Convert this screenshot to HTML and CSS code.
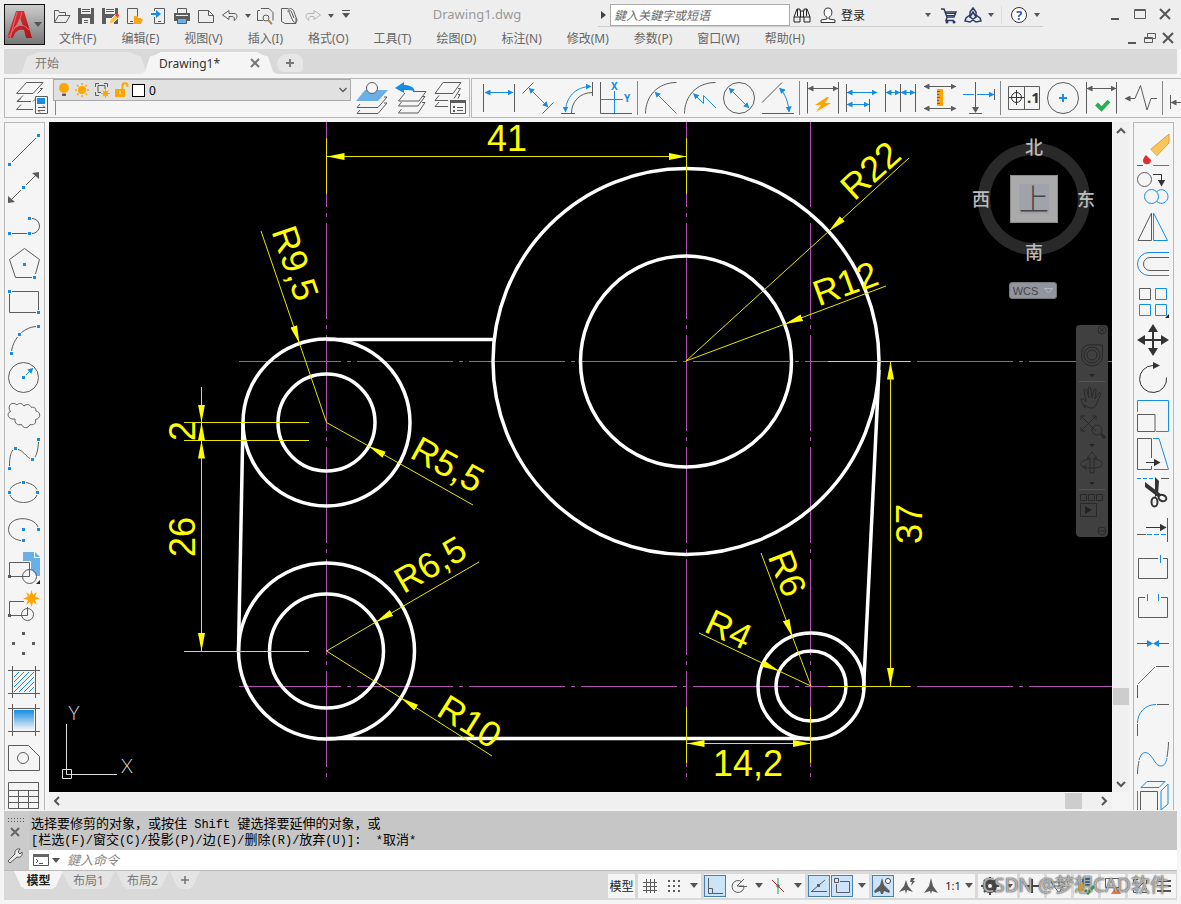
FILE: index.html
```html
<!DOCTYPE html>
<html lang="zh-CN">
<head>
    <meta charset="UTF-8">
    <meta name="viewport" content="width=device-width, initial-scale=1.0">
    <title>Drawing1.dwg</title>
    <link rel="stylesheet" href="styles.css">
</head>
<body>

<!-- Shared arrow heads and gradients -->
<svg class="defs" width="0" height="0" aria-hidden="true">
    <defs>
        <marker id="arrow-blue" viewBox="0 0 6 6" refX="5.5" refY="3" markerWidth="6" markerHeight="6" markerUnits="userSpaceOnUse" orient="auto-start-reverse"><path d="M0 0L6 3L0 6z" fill="#168ce6"/></marker>
        <marker id="arrow-gray" viewBox="0 0 6 6" refX="5.5" refY="3" markerWidth="6" markerHeight="6" markerUnits="userSpaceOnUse" orient="auto-start-reverse"><path d="M0 0L6 3L0 6z" fill="#5c5c5c"/></marker>
        <marker id="arrow-dark" viewBox="0 0 7 8" refX="6.5" refY="4" markerWidth="7" markerHeight="8" markerUnits="userSpaceOnUse" orient="auto-start-reverse"><path d="M0 0L7 4L0 8z" fill="#333"/></marker>
        <marker id="arrow-dim" viewBox="0 0 18 8" refX="18" refY="4" markerWidth="18" markerHeight="8" markerUnits="userSpaceOnUse" orient="auto-start-reverse"><path d="M0 .5L18 4L0 7.5z" fill="#ff0"/></marker>
        <linearGradient id="fill-fade" x1="0" y1="0" x2="0" y2="1"><stop offset="0" stop-color="#168ce6"/><stop offset="1" stop-color="#f5f5f5"/></linearGradient>
        <linearGradient id="logo-red" x1="0" y1="0" x2="1" y2="1"><stop offset="0" stop-color="#e0393c"/><stop offset="1" stop-color="#a81419"/></linearGradient>
    </defs>
</svg>

<!-- Title bar and menu -->
<header class="header">
    <button class="app-button" aria-label="应用程序菜单">
        <svg width="26" height="28" viewBox="0 0 26 28"><path d="M0 27L9 0h8l8 27h-6l-2-8c-5-1-9 1-11 8z" fill="url(#logo-red)"/><path d="M13 7l3 8c-3-1-5 0-7 2z" fill="#999"/><path d="M10 1l-7 26M15 1c-2 9-7 17-15 26M7 17c5-4 10-4 15 2" stroke="#f0696b" fill="none"/></svg>
        <span class="caret caret-big"></span>
    </button>
    <div class="header-main">
        <div class="title-row">
            <div class="quick-access">
                <button aria-label="打开"><svg viewBox="0 0 18 18" width="18" height="18"><path class="g" d="M1.500 15.500V3.500h4l1 2h6v3M1.500 15.500l4-7h11.500l-4 7z"/></svg></button>
                <button aria-label="保存"><svg viewBox="0 0 18 18" width="18" height="18"><path class="fg" d="M1 1h16v16H1z"/><path d="M4 1h10v6H4zM5 11h8v6H5z" fill="#eee"/><path class="fg" d="M5 2h8v1H5zM5 4h8v1H5zM7 13h4v1H7zM7 15h4v1H7z"/></svg></button>
                <button aria-label="另存为"><svg viewBox="0 0 18 18" width="18" height="18"><path class="fg" d="M1 1h16v16H1z"/><path d="M4 1h10v6H4zM5 11h8v6H5z" fill="#eee"/><path class="fg" d="M5 2h8v1H5zM5 4h8v1H5z"/><path d="M8 17l1-4 6-6 3 3-6 6z" fill="#fbc04d" stroke="#eee"/><path d="M14 8l3 3 1-3-2-2z" fill="#e33"/></svg></button>
                <button aria-label="从移动设备打开"><svg viewBox="0 0 18 18" width="18" height="18"><path class="g" d="M2.500 1.500h10v8M2.500 1.500v15h6M5 14.500h3"/><path d="M9 16V9h3l1 2h3v1h2l-2 5H9z" fill="#f7a41d"/></svg></button>
                <button aria-label="保存到移动设备"><svg viewBox="0 0 18 18" width="18" height="18"><path class="g" d="M5.500 4V1.500h10v15h-10V10M9 14.500h3"/><path d="M2 6h5V3l5 4-5 4V8H2z" fill="#168ce6"/></svg></button>
                <button aria-label="打印"><svg viewBox="0 0 18 18" width="18" height="18"><path class="g" d="M4.500 6V1.500h9V6"/><path class="fg" d="M1 6h16v8H1z"/><path d="M3 8h12v1H3z" fill="#eee"/><path d="M4.500 11.500h9v5h-9z" fill="#69b0e6" stroke="#5c5c5c"/></svg></button>
                <button aria-label="新建"><svg viewBox="0 0 18 18" width="18" height="18"><path class="g" d="M1.500 3.500h10l5 5v7h-15zM11.500 3.500v5h5"/></svg></button>
                <button aria-label="放弃"><svg viewBox="0 0 18 18" width="18" height="18"><path class="g" d="M1.500 8L8 3.500v3h5c4 0 4 5 0 7 1-2 0-4-2-4H8v3z"/></svg></button>
                <button class="narrow" aria-label="放弃列表"><span class="caret"></span></button>
                <button aria-label="打印预览"><svg viewBox="0 0 18 18" width="18" height="18"><path class="g" d="M5 1.500h8l4 4v8M1.500 4v9.500H7M1.500 3.500H4"/><circle class="g" cx="10" cy="11" r="3"/><path d="M12 13l4 4" stroke="#b08a4a" stroke-width="2"/></svg></button>
                <button aria-label="发布"><svg viewBox="0 0 18 18" width="18" height="18"><path class="g" d="M1.500 1.500h7M1.500 1.500v13L5 16.500h11V11M8 5c0-5 5-4 6 0l3 8c0 3-3 3-4 1L9 5c0-2 2-2 2.500 0L14 11"/></svg></button>
                <button class="faded" aria-label="重做"><svg viewBox="0 0 18 18" width="18" height="18"><path class="g" d="M16.500 8L10 3.500v3H5c-4 0-4 5 0 7-1-2 0-4 2-4h3v3z"/></svg></button>
                <button class="narrow" aria-label="重做列表"><span class="caret"></span></button>
                <button class="narrow wide-caret" aria-label="自定义快速访问工具栏"><span class="caret caret-bar"></span></button>
            </div>
            <h1 class="doc-title">Drawing1.dwg</h1>
            <div class="info-center">
                <span class="caret-right"></span>
                <input class="search" type="text" placeholder="鍵入关鍵字或短语" aria-label="搜索">
                <button aria-label="查找"><svg viewBox="0 0 18 18" width="18" height="18"><path d="M4 3h3v2h4V3h3l3 8v5h-6v-5H7v5H1v-5z" fill="#eee" stroke="#222"/><path d="M7.500 5v6M10.500 5v6M4.500 3v7M13.500 3v7M1 11h6M11 11h6" stroke="#222"/></svg></button>
                <button class="login" aria-label="登录"><svg viewBox="0 0 18 18" width="18" height="18"><path d="M9 2c-6 0-4 9-1 9v2l-6 1v2.500h14V14l-6-1v-2c3 0 5-9-1-9z" fill="#fff" stroke="#333"/></svg>登录</button>
                <button class="narrow login-drop" aria-label="登录选项"><span class="caret"></span></button>
                <button aria-label="购物车"><svg viewBox="0 0 18 18" width="18" height="18"><path d="M1 3h3l3 8h7l2-5H5.500M7 11.500l-1 3h8" fill="none" stroke="#2b3a67" stroke-width="1.500"/><path d="M6 7.500h10M7 9.500h8" stroke="#2b3a67"/><circle cx="7" cy="16" r="1.500" fill="#2b3a67"/><circle cx="14" cy="16" r="1.500" fill="#2b3a67"/></svg></button>
                <button aria-label="应用商店"><svg viewBox="0 0 18 18" width="18" height="18"><path d="M9 2l-3 4v3l-4 3-1 3 5 1 3-2 3 2 5-1-1-3-4-3V6zM9 6l-3 5 3 2 3-2z" fill="none" stroke="#2b3a67" stroke-width="1.500"/></svg></button>
                <button class="narrow" aria-label="应用选项"><span class="caret"></span></button>
                <span class="info-sep"></span>
                <button class="help" aria-label="帮助"><svg viewBox="0 0 18 18" width="18" height="18"><circle cx="9" cy="9" r="7.500" fill="#fff" stroke="#333"/><text x="9" y="14" text-anchor="middle" font-size="13" font-weight="bold" fill="#1f5fc4">?</text></svg></button>
                <button class="narrow" aria-label="帮助选项"><span class="caret"></span></button>
            </div>
            <div class="window-buttons">
                <button aria-label="最小化"><svg viewBox="0 0 14 14" width="14" height="14"><path class="w2" d="M3 12h8"/></svg></button>
                <button aria-label="最大化"><svg viewBox="0 0 14 14" width="14" height="14"><path class="g" d="M1.500 2.500h11v9h-11z"/><path class="g" d="M1 3.500h12"/></svg></button>
                <button aria-label="关闭"><svg viewBox="0 0 14 14" width="14" height="14"><path class="w2" d="M2 2l10 10M12 2L2 12"/></svg></button>
            </div>
        </div>
        <div class="menu-row">
            <nav class="menu">
                <a href="#">文件(F)</a>
                <a href="#">编辑(E)</a>
                <a href="#">视图(V)</a>
                <a href="#">插入(I)</a>
                <a href="#">格式(O)</a>
                <a href="#">工具(T)</a>
                <a href="#">绘图(D)</a>
                <a href="#">标注(N)</a>
                <a href="#">修改(M)</a>
                <a href="#">参数(P)</a>
                <a href="#">窗口(W)</a>
                <a href="#">帮助(H)</a>
            </nav>
            <div class="window-buttons small">
                <button aria-label="最小化图形"><svg viewBox="0 0 14 14" width="14" height="14"><path class="w2" d="M3 12h8"/></svg></button>
                <button aria-label="还原图形"><svg viewBox="0 0 14 14" width="14" height="14"><path class="g" d="M1.500 6.500h8v5h-8zM4.500 6V2.500h8v5H10M1 7.500h8"/></svg></button>
                <button aria-label="关闭图形"><svg viewBox="0 0 14 14" width="14" height="14"><path class="w2" d="M2 2l10 10M12 2L2 12"/></svg></button>
            </div>
        </div>
    </div>
</header>

<!-- Document tabs -->
<div class="doc-tabs">
    <button class="doc-tab">开始</button>
    <button class="doc-tab active">Drawing1*<svg viewBox="0 0 10 10" width="10" height="10"><path d="M1 1l8 8M9 1L1 9" stroke="#777" stroke-width="2"/></svg></button>
    <button class="doc-tab add" aria-label="新图形"><svg viewBox="0 0 10 10" width="10" height="10"><path d="M5 1v8M1 5h8" stroke="#777" stroke-width="2"/></svg></button>
</div>

<!-- Layer and dimension toolbars -->
<div class="toolbars">
    <div class="toolbar layers">
        <span class="grip"></span>
        <button aria-label="图层特性"><svg class="icon" viewBox="0 0 32 32"><path class="g" d="M10.500.5H27L17 11.500H.5zM24 6.500h2.500l-5 5M5 16.500l-4 3h14M7 13.500l-6 6M17 19.500l3-3M5 22.500l-4.500 5H17"/><path d="M19.500 14.500h12v17h-12z" fill="#f5f5f5" stroke="#5c5c5c"/><path class="fb" d="M21 16h8v6h-8z"/><path class="g" d="M22 25.500h7l-2-2M29 28.500h-7l2 2"/></svg></button>
        <div class="layer-cell">
            <div class="layer-box">
                <svg viewBox="0 0 12 16" width="12" height="16"><circle cx="6" cy="6" r="5" fill="#ffa500"/><path d="M4 11h4v1H4z" fill="#ffa500"/><path class="fg" d="M4 12h4v2H4z"/></svg>
                <svg viewBox="0 0 16 16" width="16" height="16"><circle cx="8" cy="8" r="4" fill="#ffa500"/><path d="M8 1v2M8 13v2M1 8h2M13 8h2M3 3l1.500 1.500M11.500 11.500L13 13M13 3l-1.500 1.500M3 13l1.500-1.500" stroke="#ffa500" stroke-width="1.500"/></svg>
                <svg viewBox="0 0 18 16" width="18" height="16"><path class="g" d="M2.500 5V1.500H6M11 1.500h3.500V5M2.500 10v3.500H6M5 3.500h7V7M5 3.500v7h3"/><circle cx="12.500" cy="11.500" r="2.500" fill="#ffa500"/><path d="M12.500 7v9M8 11.500h9M9.500 8.500l6 6M15.500 8.500l-6 6" stroke="#ffa500"/></svg>
                <svg viewBox="0 0 16 16" width="16" height="16"><path d="M1 7h10v8H1z" fill="#ffa500"/><path d="M8.500 7V3.500c0-3 5-3 5 0V5" stroke="#ffa500" stroke-width="2" fill="none"/><path d="M6 9v3" stroke="#fff"/></svg>
                <span class="swatch"></span>
                <select aria-label="图层"><option>0</option></select>
                <svg class="chevron" viewBox="0 0 8 6" width="8" height="6"><path class="g" d="M.5 1L4 4.500 7.500 1"/></svg>
            </div>
        </div>
        <button aria-label="将对象的图层置为当前"><svg class="icon" viewBox="0 0 32 32"><path d="M9 8h23L22 19H0z" fill="#69b0e6"/><circle cx="16" cy="6" r="5.500" fill="#f5f5f5" stroke="#5c5c5c"/><path class="g" d="M28 15h3L22 25.500H1l3-3.500M28 21h3l-9 10.500H1l3-3.500"/></svg></button>
        <button aria-label="上一个图层"><svg class="icon" viewBox="0 0 32 32"><path class="g" d="M18 9.500h13L24 19H3.500L10 11M27 14.500h3l-7 9.500H3.500l3-4M27 20.500h3L23 31H3.500l3-4"/><path class="fb" d="M0 6l9-6v3c6 0 10 2 11 7-3-2-6-2-11-2v3z"/></svg></button>
        <button aria-label="图层状态管理器"><svg class="icon" viewBox="0 0 32 32"><path class="g" d="M9 .5h18L19 11.500H1zM24 6.500h2.500L20 16.500M5 13.500l-4 5h13M5 20l-4 4.500h13M24 12.500h2l-2 4"/><path d="M16.500 18.500h15v13h-15z" fill="#f5f5f5" stroke="#5c5c5c"/><path class="fg" d="M16 18h16v3H16zM19 24h2v2h-2zM19 28h2v2h-2z"/><path class="g" d="M23 25.500h6M23 28.500h6"/></svg></button>
    </div>
    <div class="toolbar dims">
        <span class="grip"></span>
        <button aria-label="线性"><svg class="icon" viewBox="0 0 32 32"><path class="g" d="M.5 2v28M31.500 2v28"/><path class="b two" d="M2 10.500h28"/></svg></button>
        <button aria-label="对齐"><svg class="icon" viewBox="0 0 32 32"><path class="g" d="M.5 11.500l11-11M20.500 31.500l11-11"/><path class="b two" d="M7 6l19 19"/></svg></button>
        <button aria-label="弧长"><svg class="icon" viewBox="0 0 32 32"><path class="g" d="M0 31.500h14M31.500 0v14M10.500 31c0-11 8-20.500 21-20.500"/><path class="b two" d="M4.500 30C4.500 16 14 4.500 30 4.500"/></svg></button>
        <button aria-label="坐标"><svg class="icon" viewBox="0 0 32 32"><path class="g" d="M.5 0v31.500H32"/><path class="b" d="M14.500 9v22M1 17.500h22"/><text class="tb" x="11" y="8">X</text><text class="tb" x="24" y="20">Y</text></svg></button>
        <span class="sep"></span>
        <button aria-label="半径"><svg class="icon" viewBox="0 0 32 32"><path class="g" d="M.5 31.500C.5 15 12 .5 31.500.5"/><path class="b one" d="M31.500 31.500L10 10"/></svg></button>
        <button aria-label="折弯"><svg class="icon" viewBox="0 0 32 32"><path class="g" d="M.5 31.500C.5 15 12 .5 31.500.5"/><path class="b one" d="M32 26L19.500 13.500v8L9.500 11.500"/></svg></button>
        <button aria-label="直径"><svg class="icon" viewBox="0 0 32 32"><circle class="g" cx="16" cy="16" r="15.500"/><path class="b two" d="M6 6l20 20"/></svg></button>
        <button aria-label="角度"><svg class="icon" viewBox="0 0 32 32"><path class="g" d="M0 20.500l20-20M0 31.500h32"/><path class="b two" d="M17.500 6c6 6 9 15 9.500 24"/></svg></button>
        <span class="sep"></span>
        <button aria-label="快速标注"><svg class="icon" viewBox="0 0 32 32"><path class="g" d="M.5 0v31.500M31.500 0v31.500"/><path class="g two" d="M1 6.500h30"/><path d="M20 15l-12 8h6l-5 7 15-9h-6l4-6z" fill="#ffa500"/></svg></button>
        <button aria-label="基线"><svg class="icon" viewBox="0 0 32 32"><path class="g" d="M.5 2v28M23.500 17v13"/><path class="b two" d="M1 10.500h30"/><path class="b two" d="M1 22.500h22"/></svg></button>
        <button aria-label="连续"><svg class="icon" viewBox="0 0 32 32"><path class="g" d="M.5 2v28M15.500 2v28M30.500 2v28"/><path class="b two" d="M1 10.500h14"/><path class="b two" d="M16 10.500h14"/></svg></button>
        <button aria-label="等距标注"><svg class="icon" viewBox="0 0 32 32"><path class="g two" d="M0 4.500h32"/><path class="g two" d="M0 26.500h32"/><path d="M13 7h6v17h-6z" fill="#ffa500"/><path d="M13 9.500h3M13 12.500h2M13 15.500h3M13 18.500h2M13 21.500h3" stroke="#5c5c5c"/></svg></button>
        <button aria-label="折断标注"><svg class="icon" viewBox="0 0 32 32"><path class="g" d="M12.500 0v28M6 31.500h13M31.500 7v11"/><path class="fg" d="M9 25h7l-3.500 6z"/><path class="b" d="M0 12.500h11"/><path class="b one" d="M14 12.500h17"/></svg></button>
        <span class="sep"></span>
        <button aria-label="公差"><svg class="icon" viewBox="0 0 32 32"><path class="g" d="M.5 4.500h31v23H.5zM16.500 4v23"/><circle cx="8.500" cy="15.500" r="5" stroke="#333" fill="none"/><path d="M1 15.500h15M8.500 8v15" stroke="#333"/><text class="td" x="19" y="21">.1</text></svg></button>
        <button aria-label="圆心标记"><svg class="icon" viewBox="0 0 32 32"><circle class="g" cx="16" cy="16" r="15.500"/><path d="M16 12v8M12 16h8" stroke="#168ce6" stroke-width="2"/></svg></button>
        <button aria-label="检验"><svg class="icon" viewBox="0 0 32 32"><path class="g" d="M.5 0v31.500M30.500 0v31.500"/><path class="g two" d="M1 6.500h29"/><path d="M10.500 22l5 5 7.500-8" stroke="#27ae55" stroke-width="4" fill="none"/></svg></button>
        <button aria-label="折弯线性"><svg class="icon" viewBox="0 0 32 32"><path class="g one" d="M32 16.500h-6L22 28 15.500 3.500 10 16.500H0"/></svg></button>
        <span class="sep"></span>
        <button aria-label="编辑标注"><svg class="icon" viewBox="0 0 32 32"><path class="g" d="M.5 13v14"/><path class="g one" d="M12 20.500H1"/></svg></button>
    </div>
</div>

<!-- Drawing area with tool palettes -->
<main class="workspace">
    <div class="palette">
        <span class="grip"></span>
        <button aria-label="直线"><svg class="icon" viewBox="0 0 32 32"><path class="g" d="M4 28L28 4"/><path class="dot" d="M1.500 30.500h0M30.500 1.500h0"/></svg></button>
        <button aria-label="构造线"><svg class="icon" viewBox="0 0 32 32"><path class="g" d="M3 28l10-10M18 13L28 3"/><path class="fg" d="M0 31v-7l7 6zM31 0v7l-7-6z"/><path class="dot" d="M15.500 15.500h0"/></svg></button>
        <button aria-label="多段线"><svg class="icon" viewBox="0 0 32 32"><path class="g" d="M4 23.500h15M24 8.500a7.500 7.500 0 0 1 0 15"/><path class="dot" d="M1.500 23.500h0M21.500 23.500h0M21.500 8.500h0"/></svg></button>
        <button aria-label="多边形"><svg class="icon" viewBox="0 0 32 32"><path class="g" d="M27.500 26l4-14.500-15-11-15 11 6 18H24"/><path class="dot" d="M16.500 16.500h0M26.500 29.500h0"/></svg></button>
        <button aria-label="矩形"><svg class="icon" viewBox="0 0 32 32"><path class="g" d="M4 5.500h26.500V24M1.500 8v18.500H28"/><path class="dot" d="M1.500 5.500h0M30.500 26.500h0"/></svg></button>
        <button aria-label="圆弧"><svg class="icon" viewBox="0 0 32 32"><path class="g" d="M3.500 27c1-6 3-10 6-14M13.500 8.500C18 5 22 3 28 2.500"/><path class="dot" d="M3.500 29.500h0M11.500 10.500h0M30.500 2.500h0"/></svg></button>
        <button aria-label="圆"><svg class="icon" viewBox="0 0 32 32"><circle class="g" cx="15.500" cy="15.500" r="15"/><path class="b one" d="M18 13l7-7"/><path class="dot" d="M15.500 15.500h0"/></svg></button>
        <button aria-label="修订云线"><svg class="icon" viewBox="0 0 32 32"><path class="g" d="M2.500 11.500C-1.500 6 4 .5 9 5c2-2.500 5-2 7 1 3-2.500 6-1.500 7.500 1.500 3-1 4.500 1 4.500 3.500 5 1 5 7.500-.5 8.500 1 4-2 6-5.500 5-2 4.500-7 4-8.500 0-4 1-7-1-6.500-5.500-7 1-9-6-4.500-7.500z"/></svg></button>
        <button aria-label="样条曲线"><svg class="icon" viewBox="0 0 32 32"><path class="g" d="M1.500 28c0-8 1-13 3.500-16M10 11.500c5 1 8 7 12 9M27 19c2-3 3-8 3.500-15"/><path class="dot" d="M1.500 30.500h0M7.500 10.500h0M24.500 21.500h0M30.500 1.500h0"/></svg></button>
        <button aria-label="椭圆"><svg class="icon" viewBox="0 0 32 32"><path class="g" d="M2 13.500c1-3 6-6 11-7M18 6.500c5 1 9 3 11 7M29 19c-4 10-23 10-27 0"/><path class="dot" d="M1.500 16.500h0M29.500 16.500h0M15.500 6.500h0"/></svg></button>
        <button aria-label="椭圆弧"><svg class="icon" viewBox="0 0 32 32"><path class="g" d="M30 13C26 2 1 1 .5 15.500.5 22 7 26 13 26.500"/><path class="dot" d="M15.500 15.500h0M30.500 15.500h0M15.500 26.500h0"/></svg></button>
        <button aria-label="插入块"><svg class="icon" viewBox="0 0 32 32"><path d="M15 0h11v6h6v18h-3l-6-7V9h-8z" fill="#69b0e6"/><path d="M27 0l5 5h-5z" fill="#69b0e6"/><path class="g" d="M1.500 10.500h20v14h-20z"/><circle class="g" cx="21.500" cy="24.500" r="7"/><path class="dot dark" d="M1.500 24.500h0"/><path d="M32 28v4h-4z" fill="#222"/></svg></button>
        <button aria-label="创建块"><svg class="icon" viewBox="0 0 32 32"><path class="g" d="M16 11.500H1.500v14h18V17"/><circle class="g" cx="19.500" cy="24.500" r="6"/><path class="dot dark" d="M1.500 25.500h0"/><path d="M23.500 0l1.500 5 4-3-2 4.500 5 2-5 1.500 2 5-4-3-1.500 5-1.500-5-4 3 2-5-5-1.500 5-2-2-4.500 4 3z" fill="#ffa500"/></svg></button>
        <button aria-label="点"><svg class="icon" viewBox="0 0 32 32"><path class="dot dark" d="M15.500 5.500h0M5.500 15.500h0M25.500 15.500h0M15.500 25.500h0"/></svg></button>
        <button aria-label="图案填充"><svg class="icon" viewBox="0 0 32 32"><path class="b" d="M6 11l5-5M6 16L16 6M6 21L21 6M6 26L26 6M11 26l15-15M16 26l10-10M21 26l5-5"/><path class="g" d="M4.500 0v32M27.500 0v32M0 4.500h32M0 27.500h32"/></svg></button>
        <button aria-label="渐变色"><svg class="icon" viewBox="0 0 32 32"><path d="M6 6h20v20H6z" fill="url(#fill-fade)"/><path class="g" d="M4.500 0v32M27.500 0v32M0 4.500h32M0 27.500h32"/></svg></button>
        <button aria-label="面域"><svg class="icon" viewBox="0 0 32 32"><path class="g" d="M.5 3.500h20l11 11v14H.5z"/><circle class="g" cx="15" cy="16" r="5.500"/></svg></button>
        <button aria-label="表格"><svg class="icon" viewBox="0 0 32 32"><path class="g" d="M.5 2.500h30v26H.5zM.5 10.500h30M.5 16.500h30M.5 22.500h30M10.500 10.500v18M20.500 10.500v18"/></svg></button>
    </div>

    <div class="viewport">
        <div class="canvas">
            <svg class="drawing" viewBox="49 122 1063 670">
                <g class="center">
                    <path d="M239 361.500h6M245 361.500h867M239 686.500h6M245 686.500h867"/>
                    <path class="down" d="M326.500 122v655M686.500 122v655M810.500 122v655"/>
                </g>
                <g class="outline">
                    <circle cx="686" cy="361.500" r="193"/>
                    <circle cx="686" cy="361.500" r="105.500"/>
                    <circle cx="326.500" cy="422.500" r="83.500"/>
                    <circle cx="326.500" cy="422.500" r="48.500"/>
                    <circle cx="326.500" cy="651" r="88"/>
                    <circle cx="326.500" cy="651" r="57"/>
                    <circle cx="811" cy="686" r="53"/>
                    <circle cx="811" cy="686" r="35"/>
                    <path d="M326.500 339.500H494M243 422.500L238.500 651M326.500 738.500H811M879 370L863.500 690"/>
                </g>
                <g class="dim">
                    <path d="M326.500 138v56M686.500 138v56M686.500 707v56M810.500 707v56M828 361.500h82M828 686.500h82M184 422.500h125M184 440.500h125M184 651.500h125M201.500 387v60"/>
                    <path class="two" d="M326.500 156.500h360"/>
                    <path class="two" d="M686.500 743.500H811"/>
                    <path class="two" d="M890.500 361.500V686"/>
                    <path class="two" d="M201.500 440.500V651"/>
                    <path class="one" d="M201.500 387v35.500"/>
                    <path class="one" d="M201.500 440.500v-18"/>
                    <path class="mid" d="M909 158L829 231L686 361"/>
                    <path class="mid" d="M886 286L785 324L686 361"/>
                    <path class="mid" d="M261 231L299.500 343.500L326.500 422.500"/>
                    <path class="mid" d="M473 505L368.500 446L326.500 422.500"/>
                    <path class="mid" d="M479 562L376 622L326.500 651"/>
                    <path class="mid" d="M492 756L401 698L326.500 651"/>
                    <path class="mid" d="M761 553L792.500 637L811 686"/>
                    <path class="mid" d="M699 633L779 671L811 686"/>
                </g>
                <g class="dim-text">
                    <text x="507" y="151">41</text>
                    <text x="748" y="776">14,2</text>
                    <text transform="translate(870 170) rotate(-42)" y="13">R22</text>
                    <text transform="translate(845 283) rotate(-20)" y="13">R12</text>
                    <text transform="translate(296 263) rotate(71)" y="13">R9,5</text>
                    <text transform="translate(448 464) rotate(29)" y="13">R5,5</text>
                    <text transform="translate(430 564) rotate(-30)" y="13">R6,5</text>
                    <text transform="translate(470 721) rotate(32)" y="13">R10</text>
                    <text transform="translate(788 573) rotate(69)" y="13">R6</text>
                    <text transform="translate(729 629) rotate(25)" y="13">R4</text>
                    <text transform="translate(182 431) rotate(-90)" y="13">2</text>
                    <text transform="translate(182 537) rotate(-90)" y="13">26</text>
                    <text transform="translate(909 524) rotate(-90)" y="13">37</text>
                </g>
                <g class="ucs">
                    <path d="M66.500 724v50.500H117M62.500 769.500h9v9h-9z"/>
                    <text x="74" y="720">Y</text>
                    <text x="127" y="773">X</text>
                </g>
            </svg>

            <div class="viewcube">
                <div class="compass">
                    <span class="north">北</span>
                    <span class="west">西</span>
                    <button class="cube-face"><span>上</span></button>
                    <span class="east">东</span>
                    <span class="south">南</span>
                </div>
                <button class="wcs">WCS <svg viewBox="0 0 9 6" width="9" height="6"><path d="M.5.5h8L4.500 5z" fill="none" stroke="#b4b6c0"/></svg></button>
            </div>

            <div class="navbar">
                <svg viewBox="0 0 32 212" width="32" height="212">
                    <g class="nav-line">
                        <circle cx="26" cy="5" r="4"/><path d="M24 3l4 4M28 3l-4 4"/>
                        <path d="M5.500 31c0-14 8-11 21-11v11c0 13-21 13-21 0z"/><circle cx="16" cy="30" r="8"/><circle cx="16" cy="30" r="5"/>
                        <path d="M9 83c-3-5-4-8-4-9 2-1 3 1 5 3L8 65c1-2 3 0 3 2l2 6-1-10c1-2 3 0 3 2l1 8 2-9c1-1 2 0 2 2l-1 8 4-6c2-1 2 1 1 3l-4 9c-1 4-8 4-11 0z"/>
                        <path d="M5 91l15 15M20 91L5 106M5 95v-4h4M16 91h4v4M5 102v4h4"/><circle cx="21" cy="105" r="5"/><path d="M25 109l4 4" stroke-width="3"/>
                        <path d="M14 148v-15h-3l5-6 5 6h-3v15zM13 134c-11 2-11 8 0 9h6c10-1 10-7 0-9M11 140l-4 2 4 3"/>
                        <path d="M4.500 169.500h6v6h-6zM12.500 169.500h6v6h-6zM20.500 169.500h6v6h-6zM4.500 178.500h16v13h-16z"/>
                        <circle cx="26" cy="206" r="4"/><path d="M23 206h6"/>
                    </g>
                    <path d="M13 49h6l-3 3zM13 119h6l-3 3zM13 157h6l-3 3zM9 181l7 4-7 4z" fill="#222"/>
                    <path d="M3 56.500h26M3 164.500h26" stroke="#575757"/>
                </svg>
            </div>
        </div>
        <div class="vscroll">
            <svg viewBox="0 0 10 8" width="10" height="8"><path class="w2" d="M1 6l4-4 4 4"/></svg>
            <span class="thumb"></span>
            <svg viewBox="0 0 10 8" width="10" height="8"><path class="w2" d="M1 2l4 4 4-4"/></svg>
        </div>
        <div class="hscroll">
            <svg viewBox="0 0 8 10" width="8" height="10"><path class="w2" d="M6 1L2 5l4 4"/></svg>
            <span class="thumb"></span>
            <svg viewBox="0 0 8 10" width="8" height="10"><path class="w2" d="M2 1l4 4-4 4"/></svg>
        </div>
    </div>

    <div class="palette">
        <span class="grip"></span>
        <button aria-label="删除"><svg class="icon" viewBox="0 0 32 32"><path d="M32 0v9L19.500 22l-6-6.500z" fill="#fbc55a" stroke="#d9a03f"/><path d="M13.500 15.500l6 6.500-5 5-6-6z" fill="#fff"/><path d="M9 21l5 5c0 6-8 5-8 1 0-2 1-4 3-6z" fill="#e32b32"/><path class="g" d="M0 31.500h6"/><path class="b" d="M16 31.500h16"/></svg></button>
        <button aria-label="复制"><svg class="icon" viewBox="0 0 32 32"><circle class="g" cx="7.500" cy="7.500" r="7"/><circle class="b" cx="14.500" cy="24.500" r="7"/><path class="b" d="M20 19.500c4-4 11-1 11 5s-7 9-11 5"/><path class="k one" d="M16 2.500h8.500V14"/></svg></button>
        <button aria-label="镜像"><svg class="icon" viewBox="0 0 32 32"><path class="g" d="M14.500 3v27.500H1z"/><path class="b" d="M16.500 3v27.500h14z"/></svg></button>
        <button aria-label="偏移"><svg class="icon" viewBox="0 0 32 32"><path class="b" d="M32 4.500H12a11.500 11.500 0 0 0 0 23h20"/><path class="g" d="M32 9.500H13a6.500 6.500 0 0 0 0 13h19"/></svg></button>
        <button aria-label="阵列"><svg class="icon" viewBox="0 0 32 32"><path class="g" d="M2.500 2.500h11v11h-11z"/><path class="b" d="M18.500 2.500h11v11h-11zM2.500 18.500h11v11h-11zM18.500 18.500h11v11h-11z"/><path d="M32 28v4h-4z" fill="#222"/></svg></button>
        <button aria-label="移动"><svg class="icon" viewBox="0 0 32 32"><path d="M16 4v24M4 16h24" stroke="#333" stroke-width="2"/><path d="M16 0l5 8H11zM16 32l5-8H11zM0 16l8-5v10zM32 16l-8-5v10z" fill="#333"/></svg></button>
        <button aria-label="旋转"><svg class="icon" viewBox="0 0 32 32"><path class="k" d="M29.500 15.500A13.500 13.500 0 1 1 16 3.500"/><path d="M16 0l7 3.500L16 7z" fill="#333"/></svg></button>
        <button aria-label="缩放"><svg class="icon" viewBox="0 0 32 32"><path class="b" d="M.5 12V.5h31v31H19"/><path class="g" d="M.5 14.500H18v17H.5z"/></svg></button>
        <button aria-label="拉伸"><svg class="icon" viewBox="0 0 32 32"><path class="g" d="M14.500 20V.5H.5v31h14V28"/><path class="b" d="M16 .5h6l9.500 31H17"/><path class="k one" d="M9 24.500h14"/></svg></button>
        <button aria-label="修剪"><svg class="icon" viewBox="0 0 32 32"><path class="b" d="M0 2.500h17" stroke-dasharray="4 2"/><path class="g" d="M24 2.500h8"/><path d="M18 1l4 4-1 14-3 2zM8 6l17 13-4 2L8 11z" fill="#333"/><ellipse cx="17.500" cy="26" rx="3" ry="4.500" fill="none" stroke="#333" stroke-width="2"/><ellipse cx="25.500" cy="22" rx="4" ry="3" fill="none" stroke="#333" stroke-width="2" transform="rotate(25 25.500 22)"/></svg></button>
        <button aria-label="延伸"><svg class="icon" viewBox="0 0 32 32"><path class="g" d="M30.500 4v24M0 20.500h9"/><path class="b" d="M10 20.500h19" stroke-dasharray="5 2"/><path class="k one" d="M9 13.500h20"/></svg></button>
        <button aria-label="打断于点"><svg class="icon" viewBox="0 0 32 32"><path class="g" d="M21 6.500H1.500v20h29v-20H26"/><path class="b" d="M23.500 3v8"/></svg></button>
        <button aria-label="打断"><svg class="icon" viewBox="0 0 32 32"><path class="g" d="M8 7.500H1.500v20h29v-20H24"/><path class="b" d="M10.500 4v7M21.500 4v7"/></svg></button>
        <button aria-label="合并"><svg class="icon" viewBox="0 0 32 32"><path class="g" d="M0 15.500h10M22 15.500h10"/><path class="fb" d="M10 12l6 3.500-6 3.500zM22 12l-6 3.500 6 3.500z"/></svg></button>
        <button aria-label="倒角"><svg class="icon" viewBox="0 0 32 32"><path class="g" d="M19 .5h13M.5 19v13"/><path class="b" d="M18 1L1 18"/></svg></button>
        <button aria-label="圆角"><svg class="icon" viewBox="0 0 32 32"><path class="g" d="M20 .5h12M.5 20v12"/><path class="b" d="M19 .5C8 .5.5 9 .5 19"/></svg></button>
        <button aria-label="光顺曲线"><svg class="icon" viewBox="0 0 32 32"><path class="g" d="M.5 32c0-6 1-10 1.500-13M31.500 0c0 6-1 11-1.500 15"/><path class="b" d="M2 18c2-7 6-10 11-5 4 4 6 11 11 11 3 0 5-3 6-8"/></svg></button>
        <button aria-label="分解"><svg class="icon" viewBox="0 0 32 32"><path class="b" d="M4 7.500l6-6h18l-6 6zM24 11l7-7v20l-7 6zM.5 11v21"/><path class="g" d="M3.500 32V11.500h17V32"/></svg></button>
    </div>
</main>

<!-- Command line -->
<section class="command">
    <div class="command-side">
        <span class="grip"></span>
        <svg viewBox="0 0 10 10" width="10" height="10"><path d="M1 1l8 8M9 1L1 9" stroke="#666" stroke-width="2"/></svg>
        <svg class="wrench" viewBox="0 0 16 16" width="16" height="16"><path d="M1 13l7-7c-1-3 2-6 5-5l-2 3 2 2 2-2c1 4-2 6-5 5l-7 6z" fill="#eee" stroke="#555"/></svg>
    </div>
    <div class="command-main">
        <div class="command-log">
            <p>选择要修剪的对象，或按住<code> Shift </code>键选择要延伸的对象，或</p>
            <p><code>[</code>栏选<code>(F)/</code>窗交<code>(C)/</code>投影<code>(P)/</code>边<code>(E)/</code>删除<code>(R)/</code>放弃<code>(U)]:&nbsp; *</code>取消<code>*</code></p>
        </div>
        <label class="command-input">
            <svg viewBox="0 0 16 12" width="16" height="12"><path d="M.5.5h15v11H.5z" fill="#fff" stroke="#555"/><path d="M0 0h16v3H0z" fill="#666"/><path d="M3 5l2 2-2 2M6 9.500h4" fill="none" stroke="#555"/></svg>
            <span class="caret caret-big"></span>
            <input type="text" placeholder="鍵入命令" aria-label="命令">
        </label>
    </div>
</section>

<!-- Layout tabs and status bar -->
<footer class="statusbar">
    <div class="layout-tabs">
        <button class="layout-tab active">模型</button>
        <button class="layout-tab">布局1</button>
        <button class="layout-tab">布局2</button>
        <button class="layout-tab add" aria-label="新布局"><svg viewBox="0 0 10 10" width="8" height="8"><path d="M5 0v10M0 5h10" stroke="#777" stroke-width="2"/></svg></button>
    </div>
    <div class="status-tools">
        <div class="group"><button class="model">模型</button></div>
        <div class="group">
            <button aria-label="栅格"><svg viewBox="0 0 16 16" width="16" height="16"><path class="g" d="M4.500 1v14M8.500 1v14M12.500 1v14M1 4.500h14M1 8.500h14M1 12.500h14"/></svg></button>
            <button aria-label="捕捉"><svg viewBox="0 0 16 16" width="16" height="16"><path class="fg" d="M2 2h2v2H2zM7 2h2v2H7zM12 2h2v2h-2zM2 7h2v2H2zM7 7h2v2H7zM12 7h2v2h-2zM2 12h2v2H2zM7 12h2v2H7zM12 12h2v2h-2z"/></svg></button>
            <button class="drop" aria-label="捕捉选项"><span class="caret caret-big"></span></button>
        </div>
        <div class="group">
            <button class="on" aria-label="正交"><svg viewBox="0 0 18 18" width="18" height="18"><path class="g" d="M2.500 1v15.500H17M2.500 11.500h4v5"/></svg></button>
            <button aria-label="极轴"><svg viewBox="0 0 18 18" width="18" height="18"><path class="g" d="M12 5a6 6 0 1 0 2 4H7l7-7M9 9.500h8"/></svg></button>
            <button class="drop" aria-label="极轴选项"><span class="caret caret-big"></span></button>
            <button class="iso" aria-label="等轴测"><svg viewBox="0 0 16 16" width="16" height="16"><path d="M2 2l12 12" stroke="#d12b2b"/><path d="M8 0v16" stroke="#1fa64a"/><path class="g" d="M7 7h2v2H7z"/></svg></button>
            <button class="drop" aria-label="等轴测选项"><span class="caret caret-big"></span></button>
        </div>
        <div class="group">
            <button class="on" aria-label="对象追踪"><svg viewBox="0 0 18 18" width="18" height="18"><path class="g" d="M1 14.500h16M2 14L15 3"/><path class="fg" d="M7 7h3v3H7z"/></svg></button>
            <button class="on" aria-label="对象捕捉"><svg viewBox="0 0 18 18" width="18" height="18"><path class="g" d="M1.500 1.500h4v4h-4zM7 4.500h9.500v11h-13V7"/></svg></button>
            <button class="drop" aria-label="捕捉设置"><span class="caret caret-big"></span></button>
        </div>
        <div class="group">
            <button class="on" aria-label="注释可见性"><svg viewBox="0 0 18 18" width="18" height="18"><path class="fg" d="M8 1l2 7 6 6-1 2-5-2-1 3H7l-1-3-5 2-1-2 6-6z"/><circle cx="14" cy="4" r="2.500" fill="#fff" stroke="#444"/></svg></button>
            <button aria-label="自动缩放"><svg viewBox="0 0 18 18" width="18" height="18"><path class="fg" d="M8 3l2 6 5 6-6-2-1 4-1-4-6 2 5-6zM13 1l-1 4h2l-1 4 4-5h-2l2-3z"/></svg></button>
            <button aria-label="注释比例"><svg viewBox="0 0 18 18" width="18" height="18"><path class="fg" d="M9 1l2 8 5 7-6-2-1 3-1-3-6 2 5-7z"/></svg></button>
            <button class="scale">1:1</button>
            <button class="drop short" aria-label="比例列表"><span class="caret caret-big"></span></button>
        </div>
        <div class="group">
            <button aria-label="切换工作空间"><svg viewBox="0 0 18 18" width="18" height="18"><circle cx="9" cy="9" r="5" fill="none" stroke="#444" stroke-width="4"/><path d="M9 0v18M0 9h18M3 3l12 12M15 3L3 15" stroke="#444" stroke-width="2"/><circle cx="9" cy="9" r="2" fill="#f5f5f5"/></svg></button>
            <button class="drop" aria-label="工作空间列表"><span class="caret"></span></button>
        </div>
        <div class="group"><button aria-label="注释监视器"><svg viewBox="0 0 18 18" width="18" height="18"><path d="M9 2v14M2 9h14" stroke="#444" stroke-width="2"/></svg></button></div>
        <div class="group"><button aria-label="隔离对象"><svg viewBox="0 0 18 18" width="18" height="18"><path class="g" d="M1 5h14L9 16zM9 2v7M3 9h12"/></svg></button></div>
        <div class="group"><button aria-label="硬件加速"><svg viewBox="0 0 18 18" width="18" height="18"><path d="M5 1h9v9H5z" fill="#1f64ad"/><path d="M1 7h6v7H1z" fill="#f7b51d"/><path d="M8 13l3 3 6-7" fill="none" stroke="#35a64a" stroke-width="3"/></svg></button></div>
        <div class="group"><button aria-label="图形状态"><svg viewBox="0 0 18 18" width="18" height="18"><path class="g" d="M1.500 1.500h14v9h-14z"/><path d="M12 9l5 8H7z" fill="#ef7d2d"/></svg></button></div>
        <div class="group last">
            <button aria-label="全屏显示"><svg viewBox="0 0 18 18" width="18" height="18"><path class="g" d="M2.500 7V2.500H7M11 2.500h4.500V7M2.500 11v4.500H7M11 15.500h4.500V11M5 13l8-8"/></svg></button>
            <button aria-label="自定义"><svg viewBox="0 0 18 18" width="18" height="18"><path d="M2 4h14M2 9h14M2 14h14" stroke="#555" stroke-width="2"/></svg></button>
        </div>
    </div>
    <span class="watermark">CSDN @梦想CAD软件</span>
</footer>

</body>
</html>
```
FILE: styles.css
```css
* {
    box-sizing: border-box;
}

body {
    margin: 0;
    height: 100vh;
    display: flex;
    flex-direction: column;
    overflow: hidden;
    background-color: #f5f5f5;
    color: #444;
    font-family: "Noto Sans", "Noto Sans CJK SC", sans-serif;
    font-size: 12px;
}

button,
input,
select {
    margin: 0;
    padding: 0;
    border: none;
    background: none;
    color: inherit;
    font: inherit;
}

button {
    display: flex;
    align-items: center;
    justify-content: center;
    flex-shrink: 0;
}

svg {
    display: block;
    flex-shrink: 0;
}

.defs {
    position: absolute;
}

/* Icon strokes and fills */
.g { stroke: #5c5c5c; fill: none; }
.b { stroke: #168ce6; fill: none; }
.k { stroke: #333; fill: none; }
.fg { fill: #5c5c5c; }
.fb { fill: #168ce6; }
.w2 { stroke: #555; stroke-width: 2; fill: none; }
.dot { stroke: #168ce6; stroke-width: 3; stroke-linecap: square; }
.dot.dark { stroke: #5c5c5c; }
.g.one { marker-end: url(#arrow-gray); }
.b.one { marker-end: url(#arrow-blue); }
.k.one { marker-end: url(#arrow-dark); }
.g.two { marker-start: url(#arrow-gray); marker-end: url(#arrow-gray); }
.b.two { marker-start: url(#arrow-blue); marker-end: url(#arrow-blue); }
.tb { fill: #168ce6; font-size: 10px; font-weight: bold; }
.td { fill: #333; font-size: 15px; font-weight: bold; }

.icon {
    width: 32px;
    height: 32px;
    overflow: visible;
}

.caret {
    border: 3px solid transparent;
    border-top: 4px solid #555;
    border-bottom: none;
}

.caret-big {
    border-width: 4px;
    border-top-width: 5px;
    border-bottom: none;
}

.caret-bar {
    position: relative;
    border-width: 4px;
    border-top-width: 5px;
}

.caret-bar::before {
    content: "";
    position: absolute;
    left: -4px;
    top: -8px;
    width: 8px;
    height: 1px;
    background-color: #555;
}

.caret-right {
    margin: 0 4px 0 3px;
    border: 4px solid transparent;
    border-left: 5px solid #444;
    border-right: none;
}

/* Header */
.header {
    display: flex;
    height: 49px;
    flex-shrink: 0;
    padding: 4px 4px 0;
    background-color: #eee;
}

.app-button {
    width: 41px;
    height: 41px;
    border: 1px solid #111;
    background: linear-gradient(#ccc, #777);
    gap: 1px;
}

.header-main {
    flex: 1;
    min-width: 0;
}

.title-row {
    display: flex;
    height: 23px;
}

.quick-access {
    display: flex;
    padding-left: 5px;
}

.quick-access button,
.info-center button {
    width: 24px;
}

.quick-access .narrow {
    width: 11px;
}

.quick-access .wide-caret {
    width: 20px;
}

.faded {
    opacity: 0.4;
}

.doc-title {
    flex: 1;
    margin: 0;
    text-align: center;
    font-size: 13px;
    font-weight: normal;
    line-height: 20px;
    color: #999;
}

.info-center {
    display: flex;
    align-items: center;
    margin-right: 59px;
    border-bottom: 1px solid #ccc;
}

.info-center .search {
    width: 180px;
    height: 22px;
    padding: 0 3px;
    border: 1px solid #aaa;
    background-color: #fff;
    font-style: italic;
}

.search::placeholder {
    color: #666;
    opacity: 1;
}

.info-center .login {
    width: 56px;
    gap: 4px;
    margin-right: 52px;
    color: #222;
}

.info-center .narrow {
    width: 12px;
}

.info-center .login-drop {
    margin-right: 3px;
}

.info-sep {
    width: 1px;
    height: 18px;
    margin: 0 5px 0 4px;
    background-color: #ddd;
}

.window-buttons {
    display: flex;
}

.window-buttons button {
    width: 25px;
    height: 20px;
}

.window-buttons.small button {
    width: 18px;
}

.menu-row {
    display: flex;
    justify-content: space-between;
    align-items: center;
    height: 22px;
}

.menu {
    display: flex;
    gap: 1px;
    padding-left: 2px;
}

.menu a {
    padding: 0 12px;
    color: #666;
    text-decoration: none;
    white-space: nowrap;
}

/* Document tabs */
.doc-tabs {
    display: flex;
    align-items: flex-end;
    height: 25px;
    flex-shrink: 0;
    margin: 0 4px;
    padding-left: 14px;
    background-color: #d9d9d9;
}

.doc-tab {
    width: 132px;
    height: 22px;
    padding: 0 17px;
    justify-content: flex-start;
    background-color: #e6e6e6;
    color: #777;
    clip-path: polygon(0 100%, 4px 90%, 9px 20%, 14px 3px, 20px 0, calc(100% - 20px) 0, calc(100% - 14px) 3px, calc(100% - 9px) 20%, calc(100% - 4px) 90%, 100% 100%);
}

.doc-tab.active {
    justify-content: space-between;
    margin-left: -9px;
    width: 136px;
    padding-left: 18px;
    background-color: #f5f5f5;
    color: #333;
}

.doc-tab.add {
    width: 26px;
    height: 18px;
    padding: 0;
    justify-content: center;
    margin-bottom: 2px;
    clip-path: none;
    border-radius: 10px 8px 4px 8px;
}

/* Toolbars */
.toolbars {
    display: flex;
    height: 40px;
    flex-shrink: 0;
    margin: 4px 0 4px 4px;
}

.toolbar {
    display: flex;
    border: 1px solid #b8b8b8;
}

.toolbar .grip {
    flex-shrink: 0;
    width: 5px;
    height: 13px;
    margin: 5px 0 0 2px;
    background-image: radial-gradient(#555 35%, transparent 40%);
    background-size: 2px 2px;
}

.layers {
    width: 466px;
    flex-shrink: 0;
}

.layers button {
    width: 39px;
}

.layers > button:first-of-type {
    width: 41px;
    padding-right: 1px;
}

.layer-cell {
    flex: 1;
    padding-right: 1px;
}

.layer-cell::after {
    content: "";
    display: block;
    height: 14px;
    border-left: 1px solid #888;
    margin-left: 2px;
}

.layer-box {
    display: flex;
    align-items: center;
    gap: 4px;
    height: 22px;
    padding: 0 3px 0 4px;
    border: 1px solid #aaa;
    background-color: #e1e1e1;
}

.layer-box svg:nth-child(2),
.layer-box svg:nth-child(3) {
    margin-right: -1px;
}

.chevron .g {
    stroke-width: 1.5;
}

.swatch {
    width: 13px;
    height: 13px;
    border: 1px solid #000;
    background-color: #fff;
}

.layer-box svg + .swatch {
    margin-left: -2px;
}

.layer-box select {
    flex: 1;
    appearance: none;
    color: #000;
}

.dims {
    flex: 1;
    min-width: 0;
    overflow: hidden;
    margin-left: 1px;
    border-right: none;
}

.dims button {
    width: 39px;
}

.dims .sep {
    flex-shrink: 0;
    width: 6px;
    margin: 2px 0;
    background: linear-gradient(#888, #888) 2px 0 / 1px 100% no-repeat;
}

/* Workspace */
.workspace {
    flex: 1;
    min-height: 0;
    display: flex;
    gap: 4px;
    padding: 0 7px 0 4px;
}

.palette {
    width: 41px;
    flex-shrink: 0;
    overflow: hidden;
    border: 1px solid #b8b8b8;
    border-bottom: none;
}

.palette .grip {
    display: block;
    width: 14px;
    height: 4px;
    margin: 2px 0 2px 3px;
    background-image: radial-gradient(#555 35%, transparent 40%);
    background-size: 2px 2px;
}

.palette button {
    width: 38px;
    height: 38px;
}

.viewport {
    flex: 1;
    min-width: 0;
    display: grid;
    grid-template-columns: minmax(0, 1fr) 16px;
    grid-template-rows: minmax(0, 1fr) 16px;
    gap: 1px;
    padding-bottom: 1px;
}

.canvas {
    position: relative;
    background-color: #000;
    overflow: hidden;
}

.drawing {
    width: 100%;
    height: 100%;
}

.center path {
    fill: none;
    stroke: #b352b3;
    stroke-dasharray: 96 6 4 6;
    shape-rendering: crispEdges;
}

.center .down {
    stroke-dashoffset: 11;
}

.outline {
    fill: none;
    stroke: #fff;
    stroke-width: 3.5;
}

.dim path {
    fill: none;
    stroke: #e6e600;
}

.dim .one { marker-end: url(#arrow-dim); }
.dim .two { marker-start: url(#arrow-dim); marker-end: url(#arrow-dim); }
.dim .mid { marker-mid: url(#arrow-dim); }

.dim-text {
    fill: #ff0;
    font-family: "Liberation Sans", Arial, sans-serif;
    font-size: 36px;
    text-anchor: middle;
}

.ucs path {
    fill: none;
    stroke: #ddd;
}

.ucs text {
    fill: #ddd;
    font-family: Lato, sans-serif;
    font-size: 19px;
    font-weight: 300;
    text-anchor: middle;
}

.viewcube {
    position: absolute;
    top: 21px;
    right: 22px;
    width: 112px;
    display: flex;
    flex-direction: column;
    align-items: center;
    gap: 27px;
}

.compass {
    position: relative;
    width: 112px;
    height: 112px;
    display: flex;
    align-items: center;
    justify-content: center;
    border: 12px solid #292929;
    border-radius: 50%;
    color: #bbb;
    font-size: 18px;
    font-weight: 500;
    line-height: 18px;
}

.north, .south, .west, .east {
    position: absolute;
}

.north { top: -17px; }
.south { bottom: -18px; }
.west { left: -18px; }
.east { right: -17px; }

.cube-face {
    width: 48px;
    height: 48px;
    border: 1px solid #8a8a8a;
    background-color: #aaa;
}

.cube-face span {
    width: 30px;
    height: 30px;
    background-color: #a0a3a9;
    color: #444;
    font-family: "Noto Sans CJK SC", sans-serif;
    font-size: 30px;
    font-weight: 300;
    line-height: 26px;
}

.wcs {
    width: 48px;
    height: 17px;
    gap: 6px;
    margin-right: 2px;
    border: 1px solid #777;
    border-radius: 3px;
    background-color: #9294a0;
    color: #444;
    font-family: "Liberation Sans", Arial, sans-serif;
    font-size: 11px;
}

.navbar {
    position: absolute;
    top: 203px;
    right: 4px;
    border-radius: 4px;
    background-color: #404040;
}

.nav-line {
    fill: none;
    stroke: #292929;
}

.vscroll,
.hscroll {
    display: flex;
    align-items: center;
    background-color: #f0f0f0;
}

.vscroll {
    flex-direction: column;
    padding: 5px 0 4px;
}

.hscroll {
    padding: 0 4px;
}

.thumb {
    background-color: #cdcdcd;
}

.vscroll .thumb {
    width: 16px;
    height: 17px;
    margin-top: auto;
    margin-bottom: 75px;
}

.hscroll .thumb {
    width: 17px;
    height: 16px;
    margin-left: auto;
    margin-right: 18px;
}

/* Command line */
.command {
    display: flex;
    height: 60px;
    flex-shrink: 0;
    margin: 1px 4px 0;
    border-bottom: 1px solid #bbb;
    background-color: #cbcbcb;
}

.command-side {
    display: flex;
    flex-direction: column;
    align-items: center;
    gap: 4px;
    width: 25px;
    padding: 6px 3px 6px 0;
}

.command-side .grip {
    width: 17px;
    height: 6px;
    background-image: radial-gradient(#555 40%, transparent 45%);
    background-size: 3px 3px;
}

.wrench {
    margin-top: auto;
}

.command-main {
    flex: 1;
    min-width: 0;
    display: flex;
    flex-direction: column;
}

.command-log {
    flex: 1;
    padding: 4px 2px 0;
    background-color: #c6c6c6;
    color: #000;
    font-family: "Noto Sans CJK SC", sans-serif;
    font-size: 13px;
    line-height: 16px;
}

.command-log p {
    margin: 0;
    height: 16px;
    white-space: pre;
}

.command-log code {
    font-family: "Liberation Mono", monospace;
    font-size: 12px;
    line-height: 0;
}

.command-input {
    display: flex;
    align-items: center;
    gap: 3px;
    height: 20px;
    padding: 0 4px;
    background-color: #fff;
}

.command-input input {
    flex: 1;
    padding-left: 4px;
    font-size: 13px;
    font-style: italic;
}

.command-input input::placeholder {
    color: #888;
    opacity: 1;
}

/* Status bar */
.statusbar {
    position: relative;
    display: flex;
    justify-content: space-between;
    height: 29px;
    flex-shrink: 0;
    margin: 0 4px 4px;
    background-color: #d9d9d9;
}

.layout-tabs {
    display: flex;
    padding-left: 10px;
}

.layout-tab {
    width: 53px;
    height: 18px;
    margin-right: 1px;
    background-color: #e4e4e4;
    color: #777;
    clip-path: polygon(0 0, 100% 0, calc(100% - 7px) 85%, calc(100% - 11px) 100%, 11px 100%, 7px 85%);
}

.layout-tab.active {
    width: 49px;
    margin-right: -1px;
    background-color: #f5f5f5;
    color: #222;
    font-weight: bold;
}

.layout-tab.add {
    width: 30px;
}

.status-tools {
    display: flex;
    align-items: center;
    gap: 3px;
    padding-right: 1px;
}

.group {
    display: flex;
    align-items: center;
    height: 24px;
    background-color: #f5f5f5;
}

.group button {
    width: 24px;
    height: 22px;
}

.group .model {
    width: 27px;
    color: #222;
}

.group .drop {
    width: 15px;
}

.group .scale {
    width: 20px;
    color: #222;
    font-size: 11px;
}

.group .short {
    width: 12px;
}

.group .on {
    width: 22px;
    margin-right: 1px;
    border: 1px solid #4a7fb5;
    background-color: #cce4f9;
}

.watermark {
    position: absolute;
    right: 8px;
    top: 0;
    color: rgba(255, 255, 255, 0.6);
    font-size: 19px;
    line-height: 28px;
    text-shadow: 0 0 1px #333, 0 0 2px #666;
    white-space: nowrap;
    pointer-events: none;
}
```
